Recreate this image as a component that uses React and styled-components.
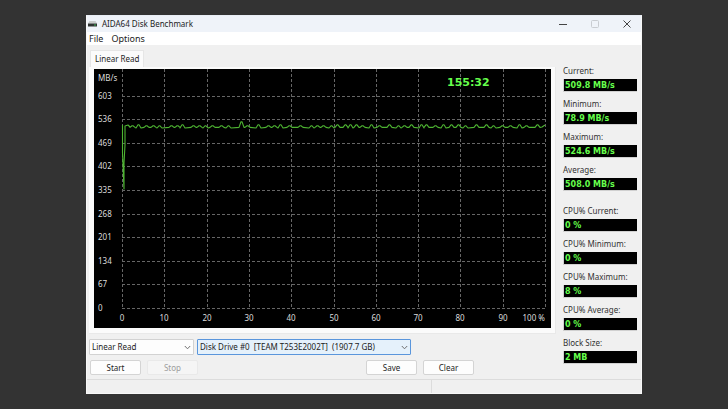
import React from "react";
import styled, { createGlobalStyle } from "styled-components";

const GlobalStyle = createGlobalStyle`
  * { box-sizing: border-box; }
  body {
    margin: 0;
    background: #333333;
    color: #1c1c1c;
    font-family: "Noto Sans", "Open Sans", sans-serif;
    font-size: 8px;
    line-height: 12px;
  }
  button, select, output { font: inherit; color: inherit; }
`;

const Desktop = styled.div`
  min-height: 100vh;
  padding: 15px 86px;
`;

const Window = styled.main`
  display: flex;
  flex-direction: column;
  background: #f0f0f0;
  border: 1px solid #f8f8f8;
  border-top-color: #e9eef5;
`;

const TitleBar = styled.header`
  display: flex;
  align-items: center;
  height: 16px;
  padding-left: 1px;
  background: #eff3f9;
`;

const Title = styled.h1`
  flex: 1;
  margin: 0 0 0 5px;
  font-size: 8px;
  font-weight: 400;
`;

const CaptionButtons = styled.div`
  display: flex;
  gap: 4px;
`;

const CaptionButton = styled.button`
  display: flex;
  align-items: center;
  justify-content: center;
  width: 28px;
  height: 16px;
  padding: 0;
  border: 0;
  background: transparent;
  color: ${(p) => (p.disabled ? "#c9ccd1" : "#444444")};
`;

const MenuBar = styled.nav`
  display: flex;
  gap: 8px;
  height: 13px;
  padding: 0 2px;
  background: #ffffff;
`;

const MenuItem = styled.button`
  padding: 0;
  border: 0;
  background: transparent;
  font-size: 9px;
`;

const Body = styled.div`
  display: grid;
  grid-template-columns: minmax(0, 1fr) 74px;
  gap: 7px;
  padding: 5px 4px 4px 2px;
`;

const Left = styled.section`
  display: flex;
  flex-direction: column;
`;

const Tab = styled.button`
  align-self: flex-start;
  height: 17px;
  margin-left: 1px;
  padding: 0 4px;
  border: 1px solid #e6e6e6;
  border-bottom: 0;
  background: #fbfbfb;
`;

const Panel = styled.div`
  padding: 2px 4px 5px 5px;
  border: 1px solid #e9e9e9;
  border-width: 0 1px 1px 0;
  background: #fbfbfb;
`;

const Plot = styled.svg`
  display: block;
  width: 100%;
  height: auto;
  background: #000000;
`;

const AxisText = styled.text`
  fill: #dcdcdc;
  font-size: 8px;
`;

const Clock = styled.text`
  fill: #66ff4c;
  font: 700 11px "DejaVu Sans", sans-serif;
`;

const Controls = styled.div`
  display: flex;
  gap: 3px;
  margin-top: 5px;
`;

const Combo = styled.label`
  display: grid;
  align-items: center;
  flex: 0 1 ${(p) => p.$width};
  color: #707070;
  > * { grid-area: 1 / 1; }
  svg { justify-self: end; margin-right: 3px; pointer-events: none; }
`;

const Select = styled.select`
  appearance: none;
  width: 100%;
  height: 16px;
  padding: 0 12px 0 2px;
  border: 1px solid ${(p) => (p.$active ? "#5a96dc" : "#d2d2d2")};
  border-radius: 1px;
  background: ${(p) => (p.$active ? "#e5f1fb" : "#fdfdfd")};
  color: #1c1c1c;
  outline: 0;
`;

const Buttons = styled.div`
  display: flex;
  justify-content: space-between;
  margin-top: 5px;
  padding: 0 82px 0 1px;
`;

const ButtonPair = styled.div`
  display: flex;
  gap: 6px;
`;

const Button = styled.button`
  width: 51px;
  height: 15px;
  padding: 0;
  border: 1px solid ${(p) => (p.disabled ? "#e9e9e9" : "#d4d4d4")};
  border-radius: 2px;
  background: ${(p) => (p.disabled ? "#f5f5f5" : "#fdfdfd")};
  color: ${(p) => (p.disabled ? "#9d9d9d" : "#1c1c1c")};
  line-height: 13px;
`;

const Stats = styled.aside`
  display: flex;
  flex-direction: column;
  gap: 14px;
  padding-top: 15px;
`;

const StatGroup = styled.div`
  display: flex;
  flex-direction: column;
  gap: 6px;
`;

const Stat = styled.div`
  display: flex;
  flex-direction: column;
  gap: 2px;
  height: 27px;
`;

const StatLabel = styled.label`
  color: #303030;
`;

const StatValue = styled.output`
  height: 13px;
  padding: 0 1px;
  background: #000000;
  border: 1px solid #d0d0d0;
  border-top: 0;
  border-right: 0;
  color: #66ff4c;
  font: 700 8px/13px "DejaVu Sans", sans-serif;
`;

const StatusBar = styled.footer`
  display: grid;
  grid-template-columns: 345px 1fr;
  height: 14px;
  border-top: 1px solid #dcdcdc;
`;

const StatusPane = styled.div`
  border-right: ${(p) => (p.$divided ? "1px solid #dcdcdc" : "0")};
`;

const COLUMNS = [0, 10, 20, 30, 40, 50, 60, 70, 80, 90];
const ROWS = [603, 536, 469, 402, 335, 268, 201, 134, 67, 0];
const ORIGIN = { x: 28, y: 239 };
const STEP_X = 42.3;
const STEP_Y = 23.6;

const PEAKS = [
  [38, 1], [44, 2], [52, 1], [59, 1], [65, 1], [77, 1], [83, 1], [88, 2], [99, 1],
  [105, 1], [111, 1], [118, 1], [127, 1], [134, 1], [147, 5], [153, 1], [164, 2],
  [174, 1], [180, 1], [186, 2], [195, 1], [206, 1], [217, 1], [223, 1], [229, 1],
  [237, 1], [243, 2], [251, 2], [256, 2], [262, 2], [268, 1], [277, 2], [285, 1],
  [295, 2], [304, 1], [310, 1], [317, 2], [327, 2], [332, 2], [341, 1], [349, 2],
  [357, 2], [364, 2], [371, 1], [382, 2], [392, 2], [399, 1], [408, 1], [416, 1],
  [425, 2], [432, 1], [443, 2],
];

const trace =
  "M28.5 56V84L30 120V94L31 76V57L34 56L36 58" +
  PEAKS.map(([x, h], i) => {
    const dip = i % 3 === 1 ? 59 : 58.4;
    return `L${x - 2} ${dip}L${x} ${57.8 - h}L${x + 1} ${57.8 - h}L${x + 3} ${dip}`;
  }).join("") +
  "L448 58L451 56";

const Chart = () => (
  <Plot viewBox="0 0 457 259" role="img" aria-label="Linear read speed">
    <g stroke="#666666" strokeDasharray="3 2" shapeRendering="crispEdges">
      {[...COLUMNS, 100].map((c, i) => {
        const x = Math.round(ORIGIN.x + i * STEP_X) + 0.5;
        return <line key={c} x1={x} x2={x} y1="0" y2={ORIGIN.y} />;
      })}
      {ROWS.map((r, i) => {
        const y = Math.round(ORIGIN.y - (9 - i) * STEP_Y) + 0.5;
        return <line key={r} x1={ORIGIN.x} x2="451" y1={y} y2={y} />;
      })}
    </g>
    <path d={trace} fill="none" stroke="#4eb432" strokeWidth="1.1" strokeLinejoin="round" />
    <AxisText x="4" y="12">MB/s</AxisText>
    {ROWS.map((r, i) => (
      <AxisText key={r} x="4" y={Math.round(ORIGIN.y - (9 - i) * STEP_Y) + 3}>{r}</AxisText>
    ))}
    {COLUMNS.map((c, i) => (
      <AxisText key={c} x={Math.round(ORIGIN.x + i * STEP_X)} y="252" textAnchor="middle">{c}</AxisText>
    ))}
    <AxisText x="451" y="252" textAnchor="end">100 %</AxisText>
    <Clock x="353" y="17">155:32</Clock>
  </Plot>
);

const Chevron = () => (
  <svg width="7" height="5" viewBox="0 0 7 5" fill="none" stroke="currentColor">
    <path d="M.8 1L3.5 3.8L6.2 1" />
  </svg>
);

const DiskIcon = () => (
  <svg width="9" height="6" viewBox="0 0 9 6">
    <path d="M1.5 0H7.5L9 2.5H0Z" fill="#c9cccb" />
    <path d="M0 2.5H9V5.5H0Z" fill="#303432" />
    <path d="M6 3.5H8V4.5H6Z" fill="#3fae58" />
  </svg>
);

const SPEEDS = [
  ["Current:", "509.8 MB/s"],
  ["Minimum:", "78.9 MB/s"],
  ["Maximum:", "524.6 MB/s"],
  ["Average:", "508.0 MB/s"],
];
const CPU = [
  ["CPU% Current:", "0 %"],
  ["CPU% Minimum:", "0 %"],
  ["CPU% Maximum:", "8 %"],
  ["CPU% Average:", "0 %"],
  ["Block Size:", "2 MB"],
];

const StatList = ({ items }) => (
  <StatGroup>
    {items.map(([label, value]) => {
      const id = label.replace(/[^a-z]/gi, "").toLowerCase();
      return (
        <Stat key={id}>
          <StatLabel htmlFor={id}>{label}</StatLabel>
          <StatValue id={id}>{value}</StatValue>
        </Stat>
      );
    })}
  </StatGroup>
);

export default function App() {
  return (
    <Desktop>
      <GlobalStyle />
      <Window>
        <TitleBar>
          <DiskIcon />
          <Title>AIDA64 Disk Benchmark</Title>
          <CaptionButtons>
            <CaptionButton aria-label="Minimize">
              <svg width="8" height="8" stroke="currentColor"><path d="M0 4.5H8" /></svg>
            </CaptionButton>
            <CaptionButton aria-label="Maximize" disabled>
              <svg width="8" height="8" fill="none" stroke="currentColor"><rect x=".5" y=".5" width="7" height="7" rx="1" /></svg>
            </CaptionButton>
            <CaptionButton aria-label="Close">
              <svg width="8" height="8" stroke="currentColor"><path d="M.5 .5L7.5 7.5M7.5 .5L.5 7.5" /></svg>
            </CaptionButton>
          </CaptionButtons>
        </TitleBar>
        <MenuBar>
          <MenuItem>File</MenuItem>
          <MenuItem>Options</MenuItem>
        </MenuBar>
        <Body>
          <Left>
            <Tab>Linear Read</Tab>
            <Panel><Chart /></Panel>
            <Controls>
              <Combo $width="105px">
                <Select aria-label="Test" defaultValue="linear">
                  <option value="linear">Linear Read</option>
                </Select>
                <Chevron />
              </Combo>
              <Combo $width="214px">
                <Select aria-label="Drive" defaultValue="disk0" $active>
                  <option value="disk0">{"Disk Drive #0\u00a0 [TEAM T253E2002T]\u00a0 (1907.7 GB)"}</option>
                </Select>
                <Chevron />
              </Combo>
            </Controls>
            <Buttons>
              <ButtonPair>
                <Button>Start</Button>
                <Button disabled>Stop</Button>
              </ButtonPair>
              <ButtonPair>
                <Button>Save</Button>
                <Button>Clear</Button>
              </ButtonPair>
            </Buttons>
          </Left>
          <Stats>
            <StatList items={SPEEDS} />
            <StatList items={CPU} />
          </Stats>
        </Body>
        <StatusBar>
          <StatusPane $divided />
          <StatusPane />
        </StatusBar>
      </Window>
    </Desktop>
  );
}
